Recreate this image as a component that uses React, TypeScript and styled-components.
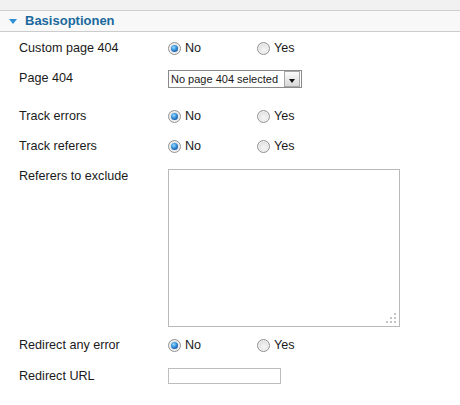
import React from "react";
import styled, { createGlobalStyle } from "styled-components";

const Global = createGlobalStyle`
  html, body { margin: 0; padding: 0; background: #fff; }
  body { font-family: "Liberation Sans", Arial, sans-serif; color: #1a1a1a; }
`;

const Page = styled.div`
  width: 460px;
  height: 405px;
  overflow: hidden;
  background: #fff;
`;

const TopBand = styled.div`
  height: 10px;
  background: #f1f1f1;
  border-bottom: 1px solid #cfcfcf;
`;

const PanelHeader = styled.div`
  height: 20px;
  background: #f8f8f8;
  border-bottom: 1px solid #cccccc;
  display: flex;
  align-items: center;
  padding-left: 9px;
  gap: 8px;
`;

const Arrow = styled.span`
  width: 0;
  height: 0;
  border-left: 4px solid transparent;
  border-right: 4px solid transparent;
  border-top: 5px solid #2d8fd5;
  margin-top: 1px;
`;

const Title = styled.h3`
  margin: 0;
  font-size: 13px;
  font-weight: bold;
  color: #1a689c;
  line-height: 20px;
`;

const Form = styled.div`
  display: flex;
  flex-direction: column;
  padding-top: 1px;
`;

const Row = styled.div<{ $top?: number; $h?: number; $alignTop?: boolean }>`
  display: flex;
  align-items: ${(p) => (p.$alignTop ? "flex-start" : "center")};
  margin-top: ${(p) => p.$top ?? 0}px;
  height: ${(p) => p.$h ?? 30}px;
`;

const Label = styled.label<{ $pad?: number }>`
  width: 149px;
  padding-left: 19px;
  font-size: 12.6px;
  line-height: 15px;
  padding-top: ${(p) => p.$pad ?? 0}px;
  flex-shrink: 0;
`;

const RadioGroup = styled.div`
  display: flex;
  align-items: center;
`;

const RadioOption = styled.span`
  display: flex;
  align-items: center;
  width: 89px;
  font-size: 12.6px;
  gap: 4px;
`;

const RadioCircle = styled.span<{ $checked?: boolean }>`
  position: relative;
  width: 11px;
  height: 11px;
  border-radius: 50%;
  border: 1px solid #8f9295;
  background: radial-gradient(circle at 55% 60%, #f6f6f6 0%, #e4e4e4 55%, #cfcfcf 100%);
  box-shadow: inset 0 0 0 1px #f2f2f2;
  display: inline-block;
  &::after {
    content: "";
    display: ${(p) => (p.$checked ? "block" : "none")};
    position: absolute;
    left: 2px;
    top: 2px;
    width: 7px;
    height: 7px;
    border-radius: 50%;
    background: radial-gradient(circle at 40% 35%, #9ddcff 0%, #3a95dd 40%, #1a5aa6 75%, #163e73 100%);
  }
`;

const SelectBox = styled.div`
  width: 132px;
  height: 16px;
  margin-top: 2px;
  border: 1px solid #8a8a8a;
  display: flex;
  align-items: center;
  justify-content: space-between;
  font-size: 11px;
  background: #fff;
  box-sizing: content-box;
`;

const SelectText = styled.span`
  padding-left: 2px;
  white-space: nowrap;
`;

const SelectButton = styled.span`
  width: 14px;
  height: 14px;
  margin-right: 1px;
  border: 1px solid #a8a8a8;
  background: linear-gradient(#fafafa, #d9d9d9);
  display: flex;
  align-items: center;
  justify-content: center;
  &::after {
    content: "";
    border-left: 3.5px solid transparent;
    border-right: 3.5px solid transparent;
    border-top: 4px solid #111;
    margin-top: 3px;
  }
`;

const TextArea = styled.div`
  position: relative;
  width: 230px;
  height: 156px;
  border: 1px solid #b9b9b9;
  background: #fff;
`;

const Grip = styled.svg`
  position: absolute;
  right: 2px;
  bottom: 2px;
`;

const TextInput = styled.div`
  width: 111px;
  height: 14px;
  border: 1px solid #bdbdbd;
  background: #fff;
`;

function Radios({ value }: { value: "No" | "Yes" }) {
  return (
    <RadioGroup>
      <RadioOption>
        <RadioCircle $checked={value === "No"} />
        No
      </RadioOption>
      <RadioOption>
        <RadioCircle $checked={value === "Yes"} />
        Yes
      </RadioOption>
    </RadioGroup>
  );
}

export default function App() {
  return (
    <Page>
      <Global />
      <TopBand />
      <PanelHeader>
        <Arrow />
        <Title>Basisoptionen</Title>
      </PanelHeader>
      <Form>
        <Row>
          <Label>Custom page 404</Label>
          <Radios value="No" />
        </Row>
        <Row>
          <Label>Page 404</Label>
          <SelectBox>
            <SelectText>No page 404 selected</SelectText>
            <SelectButton />
          </SelectBox>
        </Row>
        <Row $top={8}>
          <Label>Track errors</Label>
          <Radios value="No" />
        </Row>
        <Row>
          <Label>Track referers</Label>
          <Radios value="No" />
        </Row>
        <Row $top={8} $h={158} $alignTop>
          <Label $pad={0}>Referers to exclude</Label>
          <TextArea>
            <Grip width="11" height="11" viewBox="0 0 11 11">
              <g fill="#c4c4c4">
                <rect x="8" y="0" width="2" height="2" />
                <rect x="4" y="4" width="2" height="2" />
                <rect x="8" y="4" width="2" height="2" />
                <rect x="0" y="8" width="2" height="2" />
                <rect x="4" y="8" width="2" height="2" />
                <rect x="8" y="8" width="2" height="2" />
              </g>
            </Grip>
          </TextArea>
        </Row>
        <Row $top={3}>
          <Label>Redirect any error</Label>
          <Radios value="No" />
        </Row>
        <Row $top={1}>
          <Label>Redirect URL</Label>
          <TextInput />
        </Row>
      </Form>
    </Page>
  );
}
